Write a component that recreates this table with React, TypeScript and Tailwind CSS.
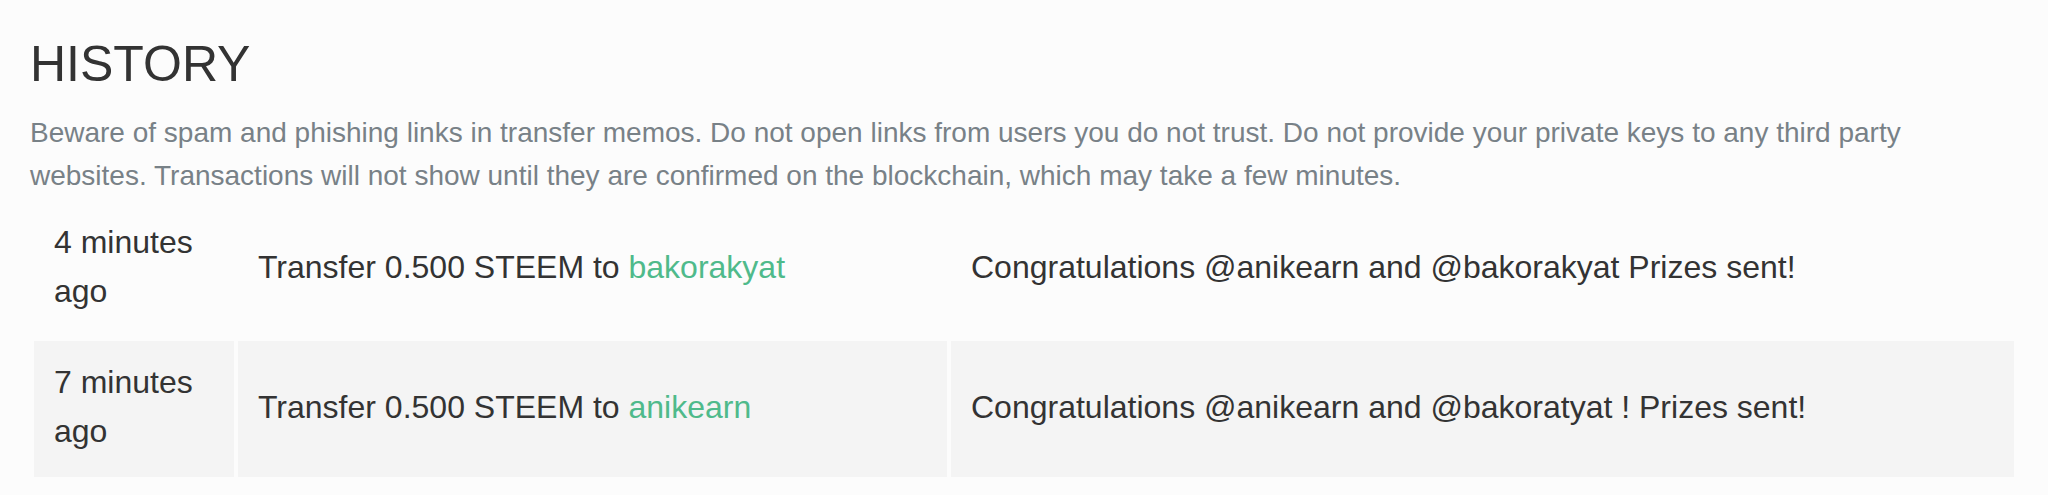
const rows = [
  {
    time: '4 minutes ago',
    amount: '0.500 STEEM',
    to: 'bakorakyat',
    memo: 'Congratulations @anikearn and @bakorakyat Prizes sent!',
  },
  {
    time: '7 minutes ago',
    amount: '0.500 STEEM',
    to: 'anikearn',
    memo: 'Congratulations @anikearn and @bakoratyat ! Prizes sent!',
  },
];

export default function App() {
  return (
    <div className="min-h-[495px] w-full bg-[#fcfcfc] px-[30px] pt-[37px] font-['Liberation_Sans',Arial,sans-serif] text-[#333333]">
      <h1 className="mb-[19px] text-[50px] leading-[55px] font-normal">HISTORY</h1>
      <p className="text-[28px] leading-[43px] text-[#788187]">
        Beware of spam and phishing links in transfer memos. Do not open links from users you do not
        trust. Do not provide your private keys to any third party websites. Transactions will not
        show until they are confirmed on the blockchain, which may take a few minutes.
      </p>

      <table className="w-full table-fixed border-separate border-spacing-[4px] text-[32px] leading-[49px]">
        <tbody>
          {rows.map((row, idx) => {
            const cell = `pt-[17px] pb-[21px] px-[20px] align-middle ${idx % 2 === 1 ? 'bg-[#f4f4f4]' : ''}`;
            return (
              <tr key={idx}>
                <td className={`w-[200px] ${cell}`}>{row.time}</td>
                <td className={`w-[709px] ${cell}`}>
                  Transfer {row.amount} to <a className="text-[#4fba8b]">{row.to}</a>
                </td>
                <td className={cell}>{row.memo}</td>
              </tr>
            );
          })}
        </tbody>
      </table>
    </div>
  );
}
